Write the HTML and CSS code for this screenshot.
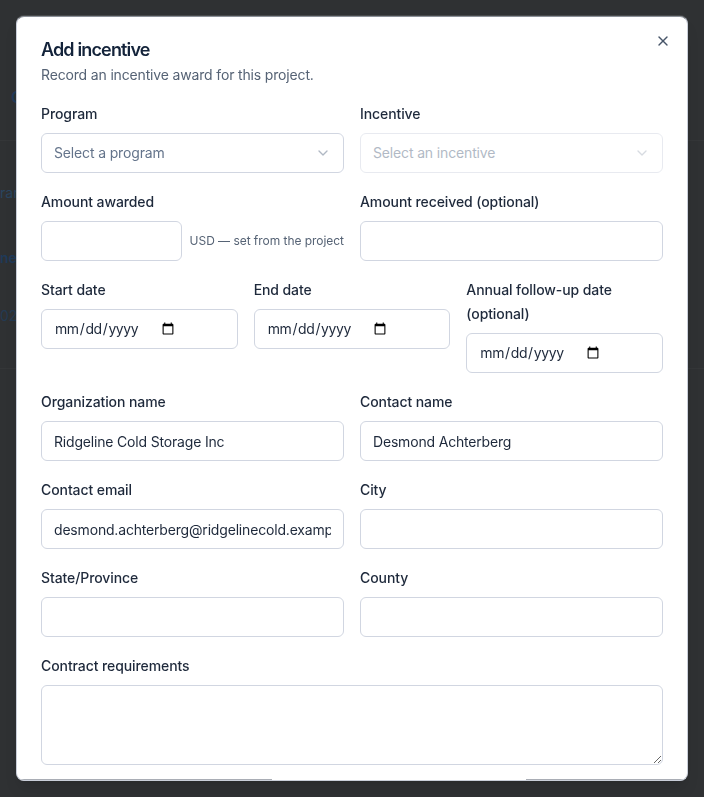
FILE: index.html
```html
<!DOCTYPE html>
<html lang="en">
<head>
<meta charset="utf-8">
<title>Add incentive</title>
<link rel="stylesheet" href="styles.css">
</head>
<body>
<div class="page" aria-hidden="true">
  <div class="page-row page-row-c">C</div>
  <div class="page-rule page-rule-top"></div>
  <div class="page-row page-row-rar">rar</div>
  <div class="page-row page-row-ner">ner</div>
  <div class="page-row page-row-date">026</div>
  <div class="page-rule page-rule-bottom"></div>
</div>
<div class="modal" role="dialog" aria-labelledby="dlg-title">
  <button class="close" type="button" aria-label="Close">
    <svg viewBox="0 0 24 24" width="16" height="16" fill="none" stroke="currentColor" stroke-width="2" stroke-linecap="round" stroke-linejoin="round"><path d="M18 6 6 18"/><path d="m6 6 12 12"/></svg>
  </button>
  <header class="head">
    <h2 id="dlg-title" class="title">Add incentive</h2>
    <p class="desc">Record an incentive award for this project.</p>
  </header>
  <form class="form">
    <div class="grid-2">
      <div class="field">
        <label class="label">Program</label>
        <button class="select" type="button"><span>Select a program</span>
          <svg class="chev" viewBox="0 0 24 24" width="16" height="16" fill="none" stroke="currentColor" stroke-width="2" stroke-linecap="round" stroke-linejoin="round"><path d="m6 9 6 6 6-6"/></svg>
        </button>
      </div>
      <div class="field">
        <label class="label">Incentive</label>
        <button class="select is-disabled" type="button" disabled><span>Select an incentive</span>
          <svg class="chev" viewBox="0 0 24 24" width="16" height="16" fill="none" stroke="currentColor" stroke-width="2" stroke-linecap="round" stroke-linejoin="round"><path d="m6 9 6 6 6-6"/></svg>
        </button>
      </div>
    </div>
    <div class="grid-2">
      <div class="field">
        <label class="label">Amount awarded</label>
        <div class="amount">
          <input class="input" type="text">
          <span class="hint">USD — set from the project</span>
        </div>
      </div>
      <div class="field">
        <label class="label">Amount received (optional)</label>
        <input class="input" type="text">
      </div>
    </div>
    <div class="grid-3">
      <div class="field">
        <label class="label">Start date</label>
        <input class="input date" type="date">
      </div>
      <div class="field">
        <label class="label">End date</label>
        <input class="input date" type="date">
      </div>
      <div class="field">
        <label class="label">Annual follow-up date (optional)</label>
        <input class="input date" type="date">
      </div>
    </div>
    <div class="grid-2">
      <div class="field">
        <label class="label">Organization name</label>
        <input class="input" type="text" value="Ridgeline Cold Storage Inc">
      </div>
      <div class="field">
        <label class="label">Contact name</label>
        <input class="input" type="text" value="Desmond Achterberg">
      </div>
    </div>
    <div class="grid-2">
      <div class="field">
        <label class="label">Contact email</label>
        <input class="input" type="text" value="desmond.achterberg@ridgelinecold.example">
      </div>
      <div class="field">
        <label class="label">City</label>
        <input class="input" type="text">
      </div>
    </div>
    <div class="grid-2">
      <div class="field">
        <label class="label">State/Province</label>
        <input class="input" type="text">
      </div>
      <div class="field">
        <label class="label">County</label>
        <input class="input" type="text">
      </div>
    </div>
    <div class="field">
      <label class="label">Contract requirements</label>
      <textarea class="input area"></textarea>
    </div>
  </form>
  <div class="clip-edge clip-left"></div>
  <div class="clip-edge clip-right"></div>
</div>
</body>
</html>
```

FILE: styles.css
```css
* { box-sizing: border-box; }

html, body {
  margin: 0;
  height: 100%;
  overflow: hidden;
}

body {
  background: #2f3133;
  font-family: Inter, "Liberation Sans", sans-serif;
  color: #1e293b;
}

.page {
  height: 797px;
  overflow: hidden;
  padding-top: 87px;
  font-size: 14px;
  line-height: 20px;
  color: #1f3a5a;
}

.page-row { white-space: nowrap; }
.page-row-c { margin-left: 11px; font-size: 16px; font-weight: 600; }
.page-rule { height: 1px; background: #343638; }
.page-rule-top { margin-top: 33px; }
.page-row-rar { margin-top: 42px; color: #2a4560; }
.page-row-ner { margin-top: 45px; font-weight: 600; }
.page-row-date { margin-top: 38px; color: #243a52; }
.page-rule-bottom { margin-top: 42px; }

.modal {
  position: fixed;
  top: 16px;
  left: 16px;
  width: 672px;
  height: 765px;
  overflow: hidden;
  padding: 24px;
  background: #ffffff;
  border: 1px solid #c9ced9;
  border-top-color: #8b9098;
  border-radius: 8px;
  box-shadow: 0 -1px 0 rgba(255, 255, 255, 0.12), 0 10px 15px -3px rgba(0, 0, 0, 0.1), 0 4px 6px -4px rgba(0, 0, 0, 0.1);
}

.close {
  position: absolute;
  top: 16px;
  right: 16px;
  width: 16px;
  height: 16px;
  padding: 0;
  border: 0;
  background: none;
  color: #475569;
  display: flex;
}

.head {
  display: flex;
  flex-direction: column;
  gap: 6px;
  margin-bottom: 16px;
}

.title {
  margin: 0;
  font-size: 18px;
  line-height: 18px;
  font-weight: 600;
  letter-spacing: -0.85px;
  color: #13233a;
}

.desc {
  margin: 0;
  font-size: 14px;
  line-height: 20px;
  letter-spacing: -0.16px;
  color: #566375;
}

.form {
  display: flex;
  flex-direction: column;
  gap: 16px;
}

.grid-2 {
  display: grid;
  grid-template-columns: repeat(2, minmax(0, 1fr));
  gap: 16px;
}

.grid-3 {
  display: grid;
  grid-template-columns: repeat(3, minmax(0, 1fr));
  gap: 16px;
}

.field {
  display: flex;
  flex-direction: column;
  min-width: 0;
}

.label {
  padding-top: 1px;
  font-size: 14px;
  line-height: 24px;
  font-weight: 500;
  letter-spacing: -0.09px;
  color: #1e293b;
  margin-bottom: 7px;
}

.input {
  display: block;
  width: 100%;
  height: 40px;
  min-width: 0;
  padding: 8px 12px;
  border: 1px solid #d1d6e1;
  border-radius: 6px;
  background: #ffffff;
  font-family: inherit;
  font-size: 14px;
  line-height: 20px;
  letter-spacing: -0.18px;
  color: #1e293b;
  outline: none;
}

.date { letter-spacing: -0.4px; }

.date::-webkit-calendar-picker-indicator { margin-right: 48px; }

.area {
  height: 80px;
  resize: vertical;
}

.select {
  display: flex;
  align-items: center;
  justify-content: space-between;
  width: 100%;
  height: 40px;
  padding: 8px 12px;
  border: 1px solid #d1d6e1;
  border-radius: 6px;
  background: #ffffff;
  font-family: inherit;
  font-size: 14px;
  line-height: 20px;
  letter-spacing: -0.15px;
  color: #64748b;
  text-align: left;
}

.chev { opacity: 0.5; flex: none; }

.is-disabled { opacity: 0.5; }

.amount {
  display: flex;
  align-items: center;
  gap: 8px;
}

.amount .input { flex: 1 1 0; width: auto; }

.hint {
  flex: none;
  font-size: 12px;
  line-height: 16px;
  letter-spacing: -0.04px;
  color: #566375;
}

.clip-edge {
  position: absolute;
  bottom: 0;
  height: 1px;
  background: #a9adb5;
}

.clip-left { left: 0; width: 255px; }
.clip-right { right: 0; width: 161px; }
```
